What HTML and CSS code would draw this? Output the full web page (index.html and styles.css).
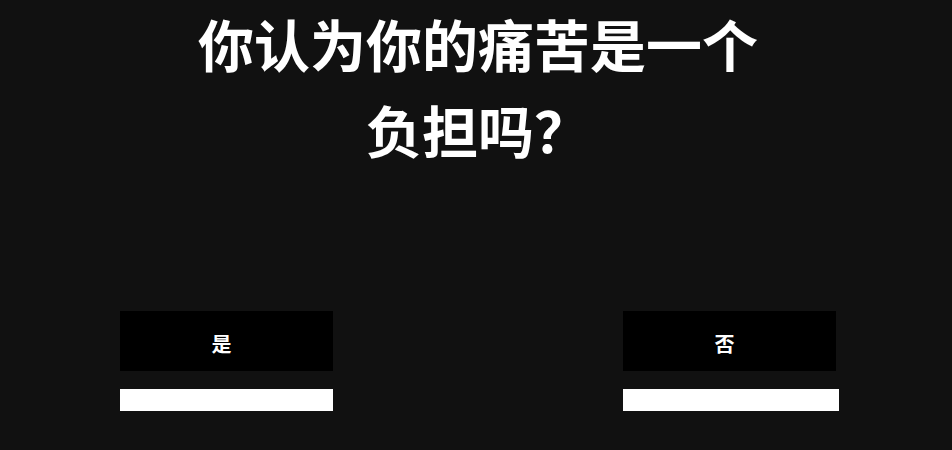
FILE: index.html
```html
<!DOCTYPE html>
<html lang="zh-CN">
<head>
<meta charset="utf-8">
<title>问题</title>
<link rel="stylesheet" href="styles.css">
</head>
<body>
<main class="page">
  <h1 class="question">你认为你的痛苦是一个负担吗？</h1>
  <div class="answers">
    <div class="answer answer-left">
      <button class="choice">是</button>
      <div class="bar"></div>
    </div>
    <div class="answer answer-right">
      <button class="choice">否</button>
      <div class="bar"></div>
    </div>
  </div>
</main>
</body>
</html>
```

FILE: styles.css
```css
html, body {
  margin: 0;
  padding: 0;
  background: #111111;
}
body {
  width: 952px;
  height: 450px;
  overflow: hidden;
  font-family: "Noto Sans CJK SC", "Noto Sans", sans-serif;
  color: #ffffff;
}
.page {
  display: flex;
  flex-direction: column;
  align-items: center;
}
.question {
  width: 600px;
  margin: 0;
  padding: 0 0 0 4px;
  font-size: 56px;
  font-weight: 600;
  line-height: 86px;
  text-align: center;
}
.answers {
  align-self: stretch;
  display: flex;
  justify-content: space-between;
  padding: 0 113px 0 120px;
  margin-top: 139px;
}
.answer {
  display: flex;
  flex-direction: column;
  gap: 18px;
}
.answer-left { width: 213px; }
.answer-right { width: 216px; }
.choice {
  width: 213px;
  height: 60px;
  border: 0;
  padding: 4px 0 0 0;
  background: #000000;
  color: #ffffff;
  font-family: "Noto Sans CJK SC", sans-serif;
  font-size: 20px;
  font-weight: 700;
  letter-spacing: 10px;
}
.bar {
  height: 22px;
  background: #ffffff;
}
```
